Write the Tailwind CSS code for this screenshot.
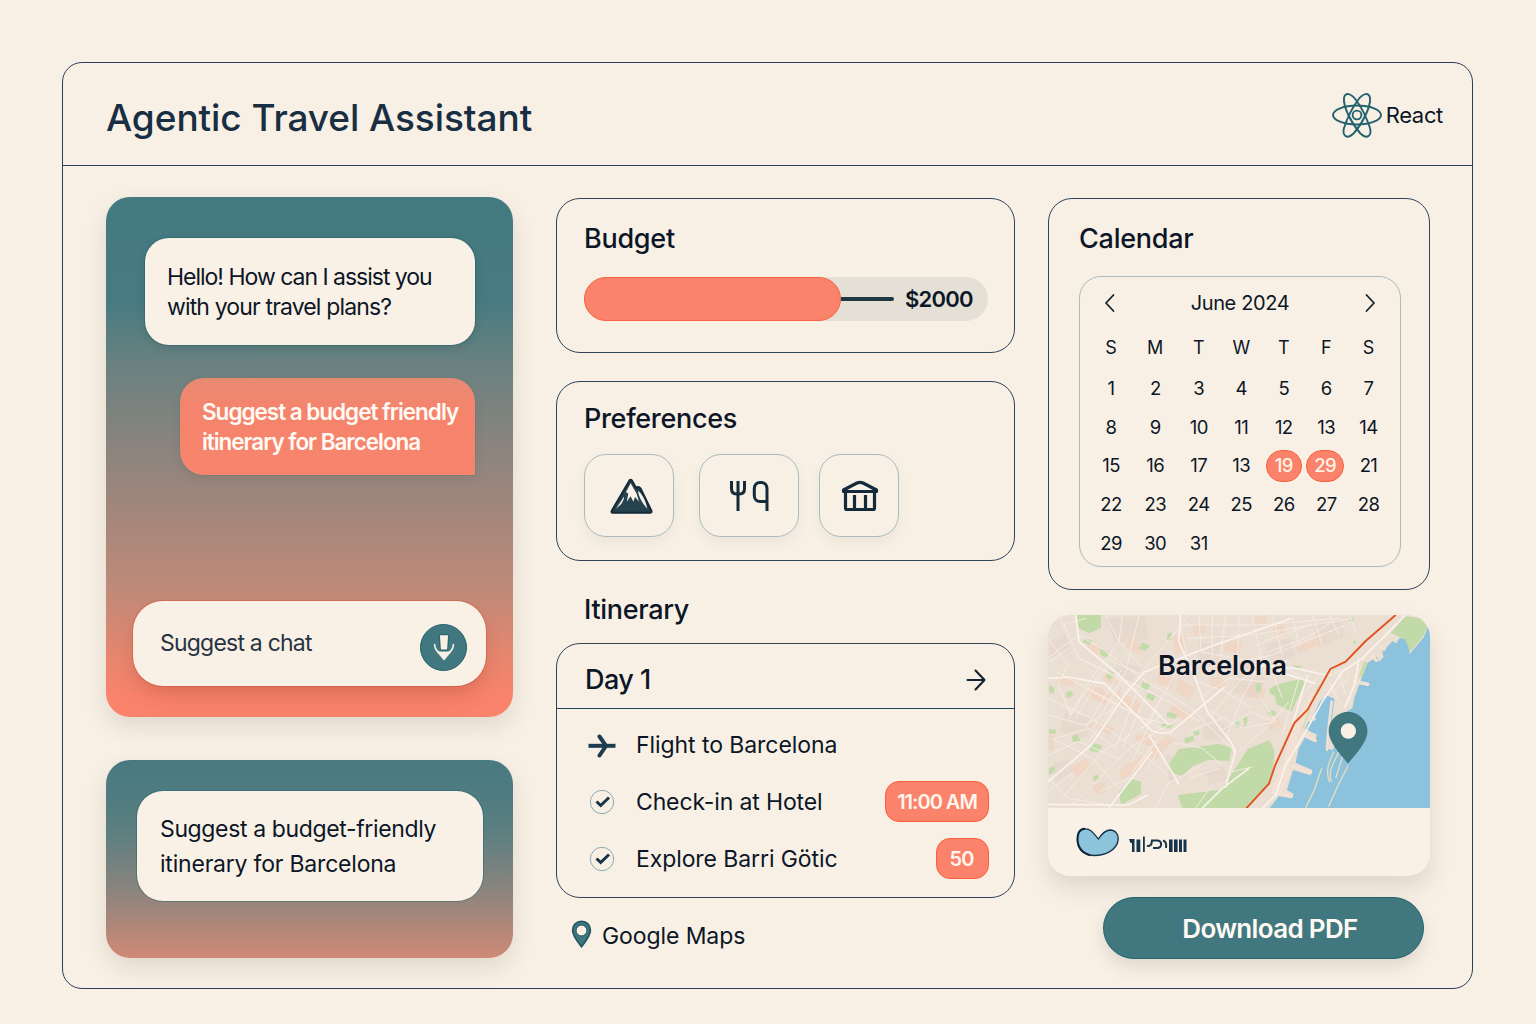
<!DOCTYPE html>
<html lang="en">
<head>
<meta charset="utf-8">
<title>Agentic Travel Assistant</title>
<script src="https://cdn.jsdelivr.net/npm/@tailwindcss/browser@4"></script>
</head>
<body class="flex h-[1024px] w-[1536px] overflow-hidden bg-[#f8f0e5] pt-[62px] pl-[62px] font-['Inter',sans-serif] text-[23px] text-[#0c1626]">
<div class="flex h-[927px] w-[1411px] flex-col rounded-[20px] border border-[#2a3f58]">

  <header class="flex h-[103px] shrink-0 items-center justify-between border-b border-[#2a3f58] pr-[29px] pl-[43px]">
    <h1 class="pt-[8px] text-[37px] leading-[44px] font-medium tracking-[-0.002em] whitespace-nowrap text-[#182e42]">Agentic Travel Assistant</h1>
    <div class="flex items-center gap-[4px] pt-[2px]">
      <svg class="h-[50px] w-[50px]" viewBox="-25 -25 50 50" fill="none" stroke="#23616e" stroke-width="1.900">
        <ellipse rx="24" ry="9.500"/>
        <path d="M-13-17C-12-23-6-22-1-15 5-7 10 4 13 13 15 21 10 25 3 18-5 9-14-8-13-17Z"/>
        <path d="M13-17C12-23 6-22 1-15-5-7-10 4-13 13-15 21-10 25-3 18 5 9 14-8 13-17Z"/>
        <circle r="4.400"/>
      </svg>
      <span class="text-[22px] leading-[28px] tracking-[-0.015em]">React</span>
    </div>
  </header>

  <main class="flex pt-[31px] pl-[43px]">

    <!-- Chat column -->
    <section class="flex w-[407px] flex-col gap-[43px]">
      <div class="flex h-[520px] flex-col rounded-[24px] bg-[linear-gradient(180deg,#437a80_0%,#467b81_20%,#6a8180_32%,#94857d_53%,#c08a78_76%,#e5866f_88%,#fa836b_96%)] pt-[41px] shadow-[0_10px_22px_rgba(90,80,60,0.14)]">
        <div class="ml-[39px] h-[107px] w-[330px] rounded-[24px] bg-[#f9f1e6] pt-[24px] pl-[22px] leading-[30px] whitespace-nowrap shadow-[0_3px_8px_rgba(30,60,65,0.18),0_0_0_1px_rgba(30,90,100,0.35)]">
          <p class="tracking-[-0.044em]">Hello! How can I assist you</p>
          <p class="tracking-[-0.037em]">with your travel plans?</p>
        </div>
        <div class="mt-[33px] ml-[74px] h-[97px] w-[295px] rounded-[24px] rounded-br-none bg-[linear-gradient(180deg,#e78a72_0%,#f5846d_30%,#f8846d_100%)] pt-[19px] pl-[22px] text-[22.5px] leading-[30px] font-semibold whitespace-nowrap text-[#fffaf4] shadow-[0_0_0_1px_rgba(90,130,130,0.35),0_4px_10px_rgba(80,60,50,0.1)]">
          <p class="tracking-[-0.045em]">Suggest a budget friendly</p>
          <p class="tracking-[-0.046em]">itinerary for Barcelona</p>
        </div>
        <div class="mt-[126px] ml-[27px] flex h-[85px] w-[353px] items-center justify-between rounded-[30px] bg-[#f9f1e6] pr-[19px] pl-[27px] shadow-[0_12px_18px_-2px_rgba(150,60,40,0.25),0_0_0_1px_rgba(215,85,60,0.5)]">
          <span class="tracking-[-0.034em] text-[#273342]">Suggest a chat</span>
          <span class="mt-[7px] flex h-[47px] w-[47px] items-center justify-center rounded-full border border-[#1d5f6b] bg-[#417880]">
            <svg class="h-[28px] w-[24px]" viewBox="0 0 24 28">
              <path d="M2.600 11.500c0 5 3.400 8 5.800 8h7.200c2.400 0 5.800-3 5.800-8" fill="none" stroke="#f8f0e5" stroke-width="1.600" stroke-linecap="round"/>
              <path d="M4.500 18.800h15L12 27.500Z" fill="#f8f0e5"/>
              <path d="M7.200 1.500h9.600l-.9 14c0 1-.6 1.700-1.500 1.700H9.600c-.9 0-1.500-.7-1.500-1.700Z" fill="#f8f0e5" stroke="#2b6a74" stroke-width="1.400"/>
            </svg>
          </span>
        </div>
      </div>

      <div class="h-[198px] rounded-[24px] bg-[linear-gradient(180deg,#487a80_0%,#507c80_20%,#5e7f80_38%,#8b847e_66%,#b08779_84%,#cf8a76_100%)] pt-[31px] pl-[31px] shadow-[0_10px_22px_rgba(90,80,60,0.14)]">
        <div class="h-[110px] w-[346px] rounded-[26px] bg-[#f9f1e6] pt-[21px] pl-[23px] leading-[34.5px] whitespace-nowrap shadow-[0_0_0_1px_rgba(30,90,100,0.4)]">
          <p class="tracking-[-0.016em]">Suggest a budget-friendly</p>
          <p class="tracking-[-0.009em]">itinerary for Barcelona</p>
        </div>
      </div>
    </section>

    <!-- Planning column -->
    <section class="ml-[43px] flex w-[459px] flex-col pt-px">
      <div class="h-[155px] rounded-[24px] border border-[#2f4459] pt-[24px] pl-[27px]">
        <h2 class="text-[27px] leading-[32px] font-medium tracking-[-0.01em]">Budget</h2>
        <div class="mt-[22px] flex h-[44px] w-[404px] items-center rounded-full bg-[#e5e0d5]">
          <div class="h-[44px] w-[257px] rounded-full border border-[#f9633f] bg-[#fb836b]"></div>
          <div class="h-[4px] w-[53px] rounded-r-full bg-[#203744]"></div>
          <span class="ml-[11px] text-[22px] leading-none font-semibold tracking-[-0.035em]">$2000</span>
        </div>
      </div>

      <div class="mt-[28px] h-[180px] rounded-[24px] border border-[#2f4459] pt-[21px] pl-[27px]">
        <h2 class="text-[27px] leading-[32px] font-medium tracking-[-0.012em]">Preferences</h2>
        <div class="mt-[19px] flex h-[83px]">
          <div class="flex w-[90px] items-center justify-center rounded-[22px] border border-[#a9bac0] shadow-[0_6px_12px_rgba(120,100,70,0.07)]">
            <svg class="h-[36px] w-[43px] translate-x-[2px]" viewBox="0 0 129 108">
              <path d="M58 8Q62 2 66 8L78 29Q86 24 92 32L124 98Q126 104 120 104H8Q3 104 5 99Z" fill="#27424f" stroke="#11283a" stroke-width="6" stroke-linejoin="round"/>
              <path d="M62 16 48 42l7 5-5 24 12-16 8 16 5-14 12 14-7-24Z" fill="#f9f1e6"/>
              <path d="M42 56 18 92l16-14 8-16Z" fill="#f9f1e6"/>
              <path d="M84 38c2 20 14 38 28 54C106 66 98 50 84 38Z" fill="#f9f1e6"/>
            </svg>
          </div>
          <div class="ml-[25px] flex w-[100px] items-center justify-center rounded-[22px] border border-[#a9bac0] shadow-[0_6px_12px_rgba(120,100,70,0.07)]">
            <svg class="h-[32px] w-[40px]" viewBox="0 0 40 32" fill="none" stroke="#132a3b" stroke-width="3">
              <path d="M2.500 1v7.500c0 3.500 2 5.500 5 5.500h3c3 0 5-2 5-5.500V1M9 1v30"/>
              <path d="M38 31V9c0-4-2.200-6.500-5.500-6.500h-1.500c-3.500 0-5.700 2.500-5.700 6.500v6.500c0 3.500 2.200 6 5.700 6h7"/>
            </svg>
          </div>
          <div class="ml-[20px] flex w-[80px] items-center justify-center rounded-[22px] border border-[#a9bac0] shadow-[0_6px_12px_rgba(120,100,70,0.07)]">
            <svg class="h-[32px] w-[38px] translate-x-[1px]" viewBox="0 0 38 32" fill="none" stroke="#132a3b" stroke-width="3.200" stroke-linejoin="round">
              <path d="M2.500 11.500v-1.500L16 3q3-1.300 6 0l13.500 7v1.500Z"/>
              <path d="M4.500 11.500V28q0 1.500 1.500 1.500H32q1.500 0 1.500-1.500V11.500"/>
              <path d="M13.500 15v14M24.500 15v14"/>
            </svg>
          </div>
        </div>
      </div>

      <h2 class="mt-[32px] ml-[28px] text-[27px] leading-[33px] font-medium tracking-[-0.012em]">Itinerary</h2>

      <div class="mt-[17px] h-[255px] rounded-[24px] border border-[#2f4459]">
        <div class="flex h-[65px] items-center justify-between border-b border-[#1f4358] pt-[7px] pr-[27px] pl-[28px]">
          <h3 class="text-[27px] leading-[32px] font-medium tracking-[-0.02em]">Day 1</h3>
          <svg class="h-[24px] w-[22px]" viewBox="0 0 22 24" fill="none" stroke="#14212f" stroke-width="2.100" stroke-linecap="round" stroke-linejoin="round"><path d="M2.500 12h17M10.500 2.500 19.500 12 10.500 21.500"/></svg>
        </div>
        <ul class="flex flex-col pt-[8px] pr-[25px] pl-[30px]">
          <li class="flex h-[57px] items-center">
            <svg class="h-[24px] w-[30px]" viewBox="0 0 30 24" fill="none" stroke="#1b3d4e" stroke-width="4" stroke-linejoin="round"><path d="M1.500 11.800h27"/><path d="M12.500 2.500 19 11.800 12.500 21.500" stroke-linecap="round"/></svg>
            <span class="ml-[19px] tracking-[-0.003em]">Flight to Barcelona</span>
          </li>
          <li class="flex h-[57px] items-center">
            <svg class="ml-[2px] h-[26px] w-[26px] -translate-y-px" viewBox="0 0 26 26" fill="none"><circle cx="13" cy="13" r="11.700" stroke="#8fa9b2" stroke-width="1"/><path d="m7.500 12.500 4.200 4 8.300-8" stroke="#16344a" stroke-width="3"/></svg>
            <span class="ml-[21px] tracking-[-0.006em]">Check-in at Hotel</span>
            <span class="ml-auto flex h-[41px] w-[104px] -translate-y-px items-center justify-center rounded-[14px] border border-[#fb5f3c] bg-[#fb836b] text-[20px] font-semibold tracking-[-0.05em] text-[#fff6ee]">11:00 AM</span>
          </li>
          <li class="flex h-[57px] items-center">
            <svg class="ml-[2px] h-[26px] w-[26px] -translate-y-px" viewBox="0 0 26 26" fill="none"><circle cx="13" cy="13" r="11.700" stroke="#8fa9b2" stroke-width="1"/><path d="m7.500 12.500 4.200 4 8.300-8" stroke="#16344a" stroke-width="3"/></svg>
            <span class="ml-[21px] tracking-[-0.004em]">Explore Barri Götic</span>
            <span class="ml-auto flex h-[41px] w-[53px] -translate-y-px items-center justify-center rounded-[14px] border border-[#fb5f3c] bg-[#fb836b] pr-[2px] text-[20px] font-semibold tracking-[-0.04em] text-[#fff6ee]">50</span>
          </li>
        </ul>
      </div>

      <div class="mt-[21px] ml-[15px] flex h-[34px] items-center">
        <svg class="-mt-[4px] h-[28px] w-[21px]" viewBox="0 0 21 28"><path d="M10.500 1.200c5.200 0 9 3.900 9 9 0 5.600-5.500 12-9 16.600-3.500-4.600-9-11-9-16.600 0-5.100 3.800-9 9-9Z" fill="#3e7680" stroke="#23525c" stroke-width="1.500"/><circle cx="10.500" cy="10.500" r="5.400" fill="#f9f1e6" stroke="#23525c"/></svg>
        <span class="ml-[10px] tracking-[-0.004em]">Google Maps</span>
      </div>
    </section>

    <!-- Calendar and map column -->
    <section class="ml-[33px] flex w-[382px] flex-col pt-px">
      <div class="h-[392px] rounded-[24px] border border-[#2f4459] pt-[24px] pl-[30px]">
        <h2 class="text-[27px] leading-[32px] font-medium tracking-[-0.009em]">Calendar</h2>
        <div class="mt-[21px] h-[291px] w-[322px] rounded-[22px] border border-[#a9bac0] px-[9px]">
          <div class="flex h-[51px] items-center justify-between px-[15px]">
            <svg class="h-[20px] w-[12px]" viewBox="0 0 12 20" fill="none" stroke="#14212f" stroke-width="1.800" stroke-linecap="round" stroke-linejoin="round"><path d="M9.500 2 2 10l7.500 8"/></svg>
            <span class="text-[20px] tracking-[-0.018em]">June 2024</span>
            <svg class="h-[20px] w-[12px]" viewBox="0 0 12 20" fill="none" stroke="#14212f" stroke-width="1.800" stroke-linecap="round" stroke-linejoin="round"><path d="m2.500 2 7.500 8-7.500 8"/></svg>
          </div>
          <div class="grid h-[40px] grid-cols-[44px_44.5px_42.5px_42.5px_42.5px_42.5px_42px] items-center text-center text-[18px] leading-none">
            <span>S</span><span>M</span><span>T</span><span>W</span><span>T</span><span>F</span><span>S</span>
          </div>
          <div class="grid auto-rows-[38.7px] grid-cols-[44px_44.5px_42.5px_42.5px_42.5px_42.5px_42px] place-items-center pt-[1px] text-[18.5px] leading-none tracking-[-0.03em]">
            <span>1</span><span>2</span><span>3</span><span>4</span><span>5</span><span>6</span><span>7</span>
            <span>8</span><span>9</span><span>10</span><span>11</span><span>12</span><span>13</span><span>14</span>
            <span>15</span><span>16</span><span>17</span><span>13</span>
            <span class="flex h-[32px] w-[36px] items-center justify-center rounded-full border border-[#fb5f3c] bg-[#fb836b] font-medium text-[#fff3e8]">19</span>
            <span class="-ml-[2px] flex h-[32px] w-[38px] items-center justify-center rounded-full border border-[#fb5f3c] bg-[#fb836b] font-medium text-[#fff3e8]">29</span>
            <span>21</span>
            <span>22</span><span>23</span><span>24</span><span>25</span><span>26</span><span>27</span><span>28</span>
            <span>29</span><span>30</span><span>31</span>
          </div>
        </div>
      </div>

      <div class="relative mt-[25px] h-[261px] rounded-[22px] bg-[#f9f1e6] shadow-[0_12px_22px_rgba(100,85,60,0.16)]">
        <svg class="h-[193px] w-[382px] rounded-t-[22px]" viewBox="27 30 1146 579" preserveAspectRatio="none">
          <rect x="27" y="30" width="1146" height="579" fill="#ebded3"/>
          <!-- city blocks -->
          <g fill="#f1d0bc" opacity=".6">
            <path d="m150 110 60 30-12 22-56-28Zm120-10 44 22-10 26-44-20ZM360 200l44 16-8 34-44-18Zm60 20 50 30-20 34-40-26ZM160 240l60 30-20 30-56-28Zm80 20 70 36-16 34-66-38ZM560 100l50 16-10 32-46-14ZM620 240l60 10-8 34-60-14ZM400 300l60 24-18 22-54-18ZM460 60l36-4 4 30-36 6ZM700 70l30-14 14 30-30 14ZM770 120l70-26 10 22-72 28ZM300 380l50 20-14 26-50-22ZM90 490l50-30 20 26-46 30Zm70 50 34-8 6 30-32 6ZM240 500l150-110 20 16-160 120ZM60 210l50 10-6 22-50-6ZM680 350l40-14 12 26-40 16ZM510 220l40-6 10 34-40 8ZM30 390l14 0v40l-14 10ZM180 350l46 20-14 20-44-20ZM590 160l60 20-8 16-56-14ZM200 205l40 18-12 18-38-18ZM400 90l36 0 6 50-34 4ZM330 440l30-20 16 18-30 24ZM640 40l40-8 4 24-40 10Z"/>
          </g>
          <g fill="#e5d6ca" opacity=".55">
            <path d="M200 40l120-6 10 70-100 10ZM480 110l70 10-10 70-60-4ZM600 200l80 20-20 60-80-20ZM80 320l90 20-30 60-80-20ZM500 340l70 20-10 50-70-10ZM240 170l80 20-20 50-80-30ZM680 120l70-20 20 50-70 30ZM40 480l50-20 10 40-50 30ZM30 110l50-20 16 50-60 20ZM500 500l50-20 20 40-60 20ZM820 60l80-20 20 50-80 40ZM380 450l40 0 20 60-50 20Z"/>
          </g>
          <!-- parks -->
          <g fill="#c2d9a8">
            <path d="M114 30h72v38l-36 17-32-17Z"/>
            <path d="M692 250l30-14 80-18-20 50-24 52-46-24-4-24-16-6Z"/>
            <path d="M390 478l30-46 70-8 50-8 40 12-10 40-60-4-50 20-30 28-38-10Z"/>
            <path d="M416 570l130-16 60-90 20-32 64-26 16 30-4 60-10 40-66 73H430Z"/>
            <path d="M240 560l40-38 26 8 0 36-60 34Z"/>
            <path d="M1056 84l40-50 50 6 20 24-14 30-40 48-12-34-18-12Z"/>
          </g>
          <g fill="#c3dbab">
            <path d="M185 132l26 12-10 20-20-12ZM136 100l24 6-8 14-22-8ZM310 230l24 8-6 20-22-10ZM322 262l28 10-8 16-26-12ZM384 86l14-4v22l-14 2ZM386 320l30 8-8 14-26-6ZM370 352l32 6-6 12-28-4ZM150 430l14-16 26 8-10 18-24 0ZM30 240l16 8-2 20-14-4ZM80 262l18-4 4 14-18 8ZM30 372l24 2-6 12-18 0ZM98 394l18-6 8 20-22 4ZM436 400l26-8 4 14-28 10ZM462 382l16-8 4 14-16 4ZM586 350l14-4 2 22-12-2ZM612 340l12-6 2 12-8 26ZM684 322l22-6 6 12-14 8ZM768 180l18 4-4 12-18-8ZM940 110l12-6-4 14ZM162 514l16-6 2 14-14 8ZM310 112l24 10-16 16-18-8ZM210 196l18 8-14 20-14-8ZM650 236l18-4-4 30-14-4ZM930 36l14 2-4 12-12-4ZM30 490l18-8 0 16-18 14Z"/>
          </g>
          <!-- sea -->
          <path d="M1173 609H692l28-36 40 6 4-12-20-12 18-60 52 16 6-16-50-22 8-40 22-40 30 10 4-14-36-18 10-20 24-6-8-14 18-40 20-20 24 10-6 50-14 100 16 4 34-110 24-16 6-30 18-50 22-56 28-18 6 16 14-16-4-14 30-32 12 6 10-16 16 4 10 22 4 22 42-50 14-34h8Z" fill="#8cc2dc"/>
          <!-- coast and piers -->
          <g fill="none" stroke="#f2e2d6" stroke-linecap="round">
            <path d="M950 230l36 8M796 390l32 16M762 484l52 18M716 566l40 8" stroke-width="11"/>
            <path d="M1022 122l14 10M1000 154l12 12" stroke-width="10"/>
            <path d="M878 290c-4 40-12 90-14 144" stroke-width="8"/>
            <path d="M962 190l-16 46-16 60" stroke-width="8"/>
            <path d="M708 560l36-90 28-100 52-100" stroke-width="22"/>
            <path d="M720 560l26-60" stroke-width="16"/>
          </g>
          <g fill="none" stroke="#e3dec2" stroke-width="4" stroke-linejoin="round">
            <path d="M884 440c-14 30-26 60-12 92M900 440c-20 40-34 60-22 90M928 480l-30 60-30 66M848 490l-24 70-24 48M912 450l-22 70"/>
          </g>
          <path d="M975 170l10 2-16 44-10-2Z" fill="#c9dca5"/>
          <path d="M842 240l-30 62M812 310l-20 60" stroke="#dcdcb2" stroke-width="6" fill="none"/>
          <!-- minor streets -->
          <g fill="none" stroke="#f5ece3" stroke-width="3">
            <path d="M27 160l90-70 70 40 120 90 150 90 130 130M60 30l60 130 80 40 100 60M27 280l130 60 120 80 110 90M40 400l120 60 80 90M150 409l90-130 130-150 80-99M200 30l40 80-90 120-60 110M250 30l-10 80 70 80M300 30l-40 170-90 160M420 30l20 110-60 120-80 130M480 30l6 110 200 40M520 30v130M560 30l-20 150M600 30l-4 160M640 30l30 150M700 30l30 120M760 30l20 90M820 30l30 90M870 30l30 60M930 30l20 50M430 60h230l240-20M440 100l200-10 300-50M500 190l200-40 220-90M27 330l110 30 90-50M50 200l190 100 160 90M140 170l130 60 120 60 90 60M180 150l120 56M160 260l150 80 90 20M230 430l-80-60-100 30M27 450l90-40 120 50M60 590l130-150 180-110M100 600l170-170 150-90M27 560l80-60M180 560l90-40M350 609l40-80M290 270l-60 160M330 250l-80 180M370 270l-90 200M210 170l-100 170M250 190l-110 180M180 209l-90 120"/>
            <path d="M480 280l90-60 110 10M520 330l80-100 60-40M560 400l50-120 40-80M600 440l90-80 60-70M500 310l110 60 100-20M540 380l100-60 60 30M470 230l90 30 80 50M700 200l30 80M740 190l60 30M660 270l50 80M450 380l100-40M400 410l90 20 60 50M450 520l90-30M380 540l110-60M580 500l60-14M470 609l50-70M870 230l30 60M900 200l20 70M850 220l70-30M880 260l50-40"/>
            <path d="M27 100l60 80-30 60 40 90M70 60l70-20M90 130l-60 40M300 480l60-80M320 500l40-70M340 420l-60 80M27 520l60 60 120 20M780 220l-50 170M800 260l40-50M700 100l120-44M690 140l110-40 80-50M650 120l50-20"/>
          </g>
          <!-- avenues -->
          <g fill="none" stroke="#faf4ed" stroke-width="5" stroke-linejoin="round">
            <path d="M110 30l10 80 120 100 150 150"/>
            <path d="M27 220l60-4 110 20 140 140q30 16 60 4l160-134"/>
            <path d="M27 530l130-110 100-150 60-70 200-76 240-84"/>
            <path d="M425 30l-6 80 46 100 40 110 70 90 14 30-30 108"/>
            <path d="M330 390l80 130 10 20M210 609l130-170"/>
            <path d="M27 598l240 2 60-30"/>
            <path d="M740 170l-20 30 110 36M806 210l-46 150"/>
            <path d="M640 180l130 10 90 20M630 490l-80 60-60 59"/>
            <path d="M1100 30l-130 130-60 40-60 90-50 90-60 100-30 90-60 60"/>
            <path d="M960 160l-14 80-30 70"/>
          </g>
          <!-- coastal highway -->
          <path d="M1070 30 980 108l-60 62-46 22-68 122-40 40-58 128-18 54-68 74" fill="none" stroke="#e2511d" stroke-width="5.500" stroke-linejoin="round"/>
          <path d="M870 378a57 56 0 0 1 114 0c0 34-36 70-57 96-21-26-57-62-57-96Z" fill="#417880" stroke="#2f6670" stroke-width="2"/>
          <circle cx="928" cy="378" r="23" fill="#f9f1e6"/>
        </svg>
        <span class="absolute top-[35px] left-[110px] text-[27px] leading-[32px] font-semibold tracking-[-0.008em] [text-shadow:0_0_3px_#f8efe6]">Barcelona</span>
        <div class="flex items-center pt-[19px] pl-[28px]">
          <svg class="h-[30px] w-[112px]" viewBox="0 0 112 30">
            <path d="M8 2c7-1 10 5 14.500 10C25 8 28 3.500 34 3c6 0 9 5 8 11-2 9-12 14.500-24 14.500C8 28 2 23 1.500 14 1 7 3 2.500 8 2Z" fill="#8cc4dc" stroke="#16324a" stroke-width="1.300"/>
            <path d="M9 1.800C3 2 1.300 7 1.500 13c.4 8 6 14 13 15.200" fill="none" stroke="#102539" stroke-width="2"/>
            <g fill="#17344a">
              <path d="M53 12h5.500v13h-2.500V16h-1.500Z"/><path d="M60.500 12.500h3.800V25h-3.800ZM67 9.500h1.800V25H67Z"/>
              <path d="M93 12.500h3.600V25H93ZM98 12.500h3.600V25H98ZM103 12.500h3V25h-3ZM107.500 12.500h3V25h-3Z"/>
            </g>
            <path d="M71 18.500c1.500 1 3 .8 3-1M75 18.500l1-5h5c5.500 0 5.500 7.500 0 7.500h-4M87 13.500c3.500 1 3.500 4 3 7.500" fill="none" stroke="#17344a" stroke-width="2"/>
          </svg>
        </div>
      </div>

      <button class="mt-[21px] ml-[55px] h-[62px] w-[321px] rounded-full border border-[#226570] bg-[#417880] pl-[13px] text-[26px] font-semibold tracking-[-0.026em] text-[#fffaf3] shadow-[0_8px_16px_rgba(90,80,60,0.14)]">Download PDF</button>
    </section>
  </main>
</div>
</body>
</html>
